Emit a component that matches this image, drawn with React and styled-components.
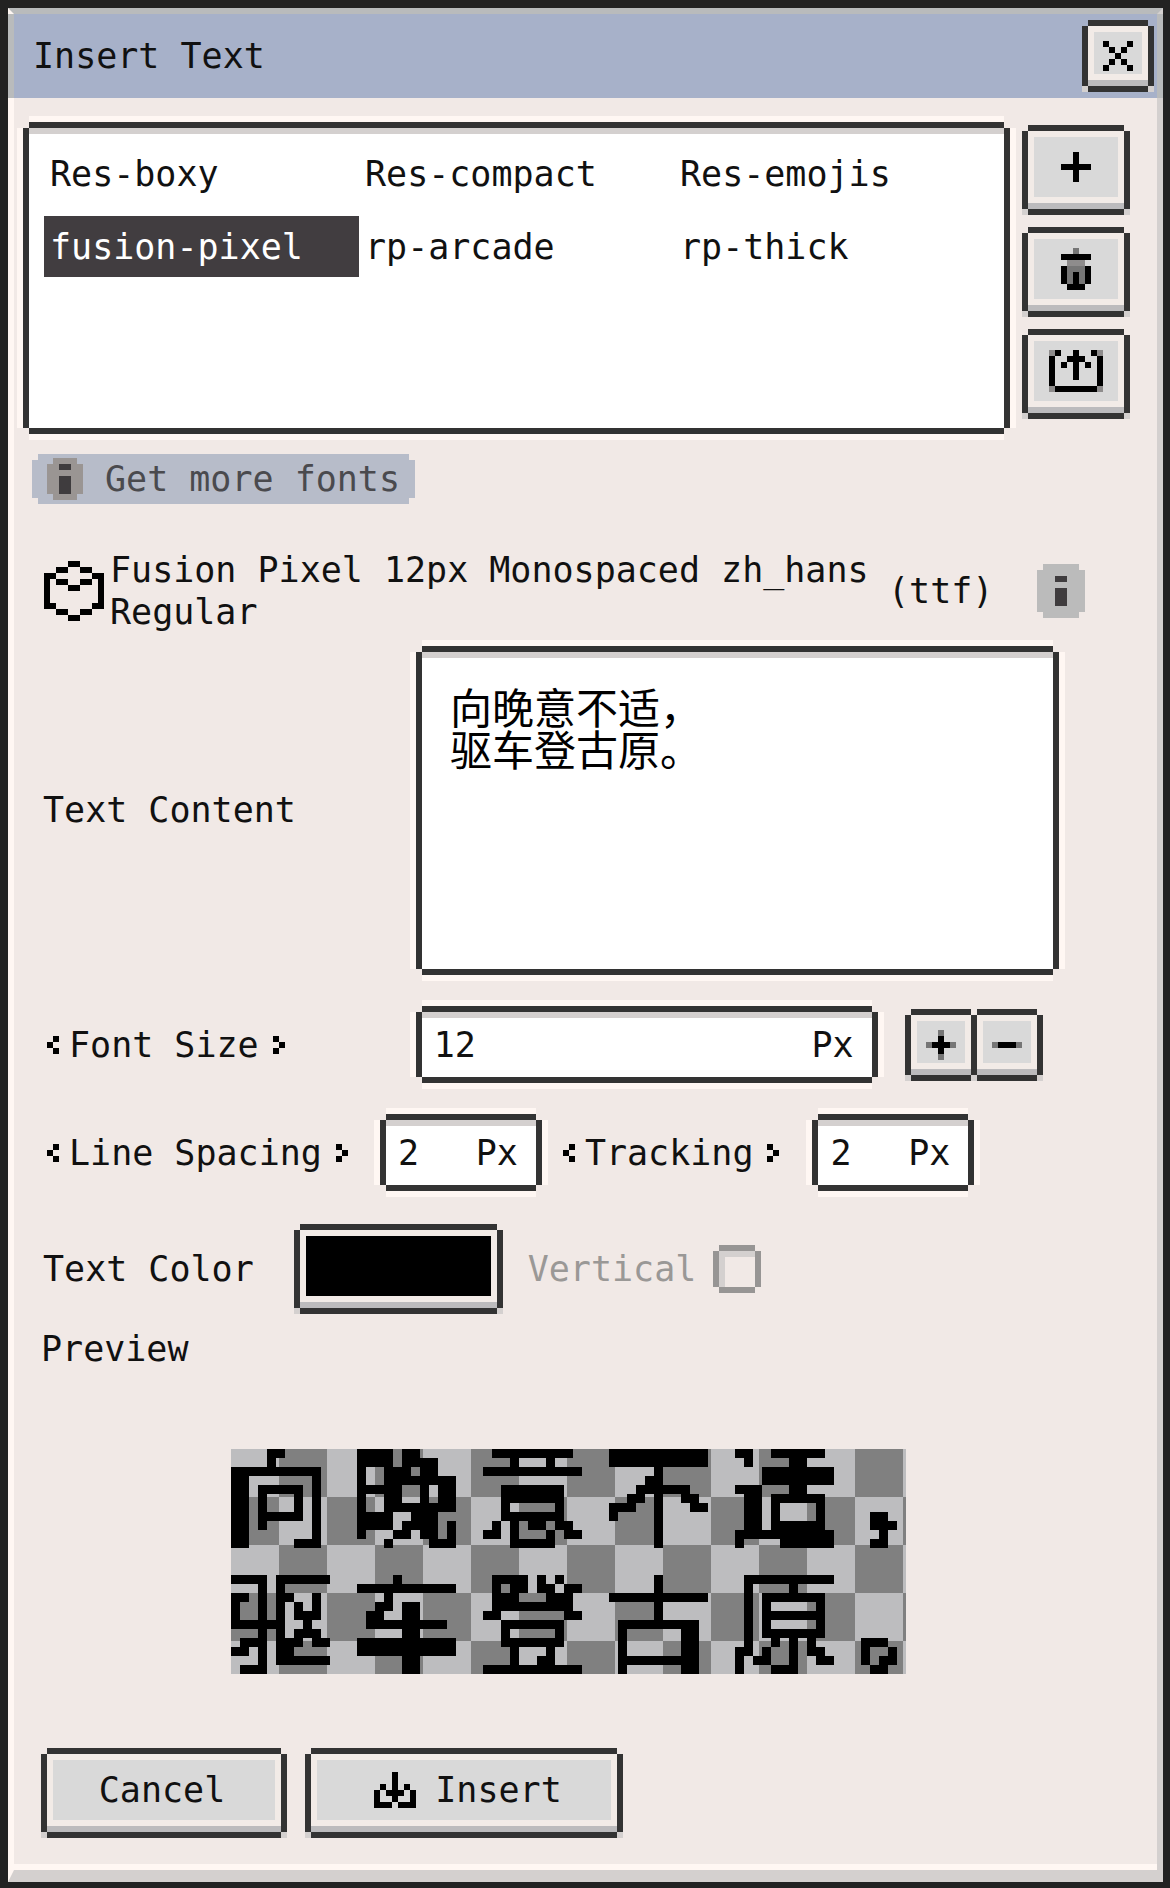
import React from 'react'
import styled, { createGlobalStyle, css } from 'styled-components'

const GlobalStyle = createGlobalStyle`
    html, body {
        margin: 0;
        padding: 0;
        background: #222;
    }
    * {
        box-sizing: border-box;
    }
`

const DARK = '#333333'
const BODY = '#f1e9e6'
const GLOW = '#fff7f3'
const EDGE = '#d4d0cf'

const palette = {
    '#': '#000000',
    g: '#8e8c8c',
    d: '#767676',
    k: '#3f3c3e',
    s: '#bbbbbb',
    m: '#9a9593',
}

function Pixel({ rows, size = 6 }) {
    const cells = []
    rows.forEach((row, y) => {
        row.split('').forEach((c, x) => {
            if (c !== '.') {
                cells.push(<rect key={x + '-' + y} x={x * size} y={y * size} width={size} height={size} fill={palette[c]} />)
            }
        })
    })
    return (
        <svg width={rows[0].length * size} height={rows.length * size} shapeRendering="crispEdges" style={{ display: 'block', flex: 'none' }}>
            {cells}
        </svg>
    )
}

const ICONS = {
    close: ['#...#', '.#.#.', '..#..', '.#.#.', '#...#'],
    plus: ['..#..', '..#..', '#####', '..#..', '..#..'],
    smallPlus: ['..d..', '..#..', 'd###d', '..#..', '..d..'],
    minus: ['d###d'],
    trash: ['..d..', '#####', '.ggg.', '#ddd#', '#d#d#', '#d#d#', '.###.'],
    upload: [
        'g#..#..#g',
        '#..###..#',
        '#.#.#.#.#',
        '#...#...#',
        '#...#...#',
        '#.......#',
        'g#######g',
    ],
    insert: ['...#...', '...#...', '.#.#.#.', '#.###.#', '#..#..#', '###.###'],
    font: [
        '....##....',
        '..##..##..',
        '##......##',
        '#.##..##.#',
        '#...##...#',
        '#........#',
        '#........#',
        '##......##',
        '..##..##..',
        '....##....',
    ],
    infoBig: ['.ssssss.', 'ssssssss', 'ssskksss', 'ssssssss', 'ssskksss', 'ssskksss', 'ssskksss', 'ssssssss', '.ssssss.'],
    infoDim: ['.mmmm.', 'mmkkmm', 'mmmmmm', 'mmkkmm', 'mmkkmm', 'mmkkmm', '.mmmm.'],
    left: ['.#', '#.', '.#'],
    right: ['#.', '.#', '#.'],
}

const Frame = styled.div`
    width: 1170px;
    height: 1888px;
    padding: 8px 7px 6px 8px;
    background: #222;
    overflow: hidden;
    font-family: "DejaVu Sans Mono", "Liberation Mono", "Noto Sans CJK SC", monospace;
    font-size: 35px;
    line-height: 42px;
    color: #111;
`

const Window = styled.div`
    height: 100%;
    display: flex;
    flex-direction: column;
    background: ${BODY};
    border-top: 6px solid #b9bbbc;
    border-left: 6px solid ${GLOW};
    border-right: 6px solid ${EDGE};
    border-bottom: 12px solid ${EDGE};
`

const TitleBar = styled.div`
    height: 84px;
    margin: 0 -6px;
    padding: 0 9px 0 19px;
    display: flex;
    align-items: center;
    justify-content: space-between;
    background: #a7b1c9;
    border-left: 6px solid #b9bbbc;
    border-right: 6px solid #b9bbbc;
`

const Body = styled.div`
    flex: 1;
    border-bottom: 6px solid ${GLOW};
`

const raised = css`
    display: flex;
    align-items: center;
    justify-content: center;
    background: #d9d9d9;
    box-shadow:
        inset 0 -6px 0 #bcbbbd,
        inset 0 -12px 0 #f2ebe7,
        inset 0 0 0 6px #f2ebe7,
        0 -6px 0 ${DARK},
        0 6px 0 ${DARK},
        -6px 0 0 ${DARK},
        6px 0 0 ${DARK},
        -6px 6px 0 ${EDGE},
        6px 6px 0 ${EDGE};
`

const sunken = css`
    background: #fff;
    box-shadow:
        inset 0 6px 0 ${EDGE},
        0 -6px 0 ${DARK},
        0 6px 0 ${DARK},
        -6px 0 0 ${DARK},
        6px 0 0 ${DARK},
        0 -12px 0 ${GLOW},
        0 12px 0 ${GLOW},
        -12px 0 0 ${GLOW},
        12px 0 0 ${GLOW};
`

const SquareButton = styled.div`
    ${raised}
    flex: none;
    width: ${(p) => p.$size}px;
    height: ${(p) => p.$size}px;
`

const ListRow = styled.div`
    display: flex;
    margin: 30px 0 0 15px;
`

const FontList = styled.div`
    ${sunken}
    width: 975px;
    height: 300px;
    padding: 15px;
    display: grid;
    grid-template-columns: repeat(3, 315px);
    grid-auto-rows: 61px;
    row-gap: 12px;
`

const FontCell = styled.div`
    padding: 1px 0 0 6px;
    line-height: 60px;
    background: ${(p) => (p.$selected ? '#413d40' : 'transparent')};
    color: ${(p) => (p.$selected ? '#fff' : '#111')};
`

const SideButtons = styled.div`
    margin: 3px 0 0 24px;
    display: flex;
    flex-direction: column;
    gap: 24px;
`

const SideButton = styled.div`
    ${raised}
    width: 96px;
    height: 78px;
    padding-bottom: 6px;
`

const MoreFonts = styled.div`
    width: 383px;
    height: 50px;
    margin: 26px 0 0 18px;
    padding-left: 15px;
    display: flex;
    align-items: center;
    gap: 22px;
    background: #b7bcc9;
    color: #4a4a4e;
    clip-path: polygon(6px 0, calc(100% - 6px) 0, calc(100% - 6px) 6px, 100% 6px, 100% calc(100% - 6px), calc(100% - 6px) calc(100% - 6px), calc(100% - 6px) 100%, 6px 100%, 6px calc(100% - 6px), 0 calc(100% - 6px), 0 6px, 6px 6px);
`

const FontInfo = styled.div`
    margin: 45px 0 0 30px;
    display: flex;
    align-items: center;
`

const FontName = styled.div`
    width: 778px;
    margin-left: 6px;
`

const FontType = styled.div`
    width: 149px;
`

const ContentRow = styled.div`
    margin: 19px 0 0 29px;
    display: flex;
    align-items: center;
`

const FieldLabel = styled.div`
    flex: none;
    width: ${(p) => p.$width}px;
    padding-bottom: 2px;
`

const TextBox = styled.div`
    ${sunken}
    width: 631px;
    height: 317px;
    padding: 33px 0 0 28px;
    font-family: "Noto Sans CJK SC", sans-serif;
    font-size: 42px;
    line-height: 42px;
    color: #000;
`

const FieldRow = styled.div`
    margin: ${(p) => p.$top}px 0 0 33px;
    display: flex;
    align-items: center;
`

const Stepper = styled.div`
    flex: none;
    display: flex;
    align-items: center;
    margin-left: ${(p) => p.$before || 0}px;
    margin-right: ${(p) => p.$after}px;
`

const StepperText = styled.span`
    margin: 0 14px 0 10px;
`

const NumberInput = styled.div`
    ${sunken}
    flex: none;
    width: ${(p) => p.$width}px;
    height: 65px;
    padding: 0 18px 0 12px;
    display: flex;
    align-items: center;
    justify-content: space-between;
`

const StepButtons = styled.div`
    margin-left: 39px;
    display: flex;
    gap: 6px;
`

const ColorRow = styled.div`
    margin: 45px 0 0 29px;
    display: flex;
    align-items: center;
`

const ColorButton = styled.div`
    ${raised}
    width: 197px;
    height: 78px;
    margin: 0 31px 0 46px;
    padding-bottom: 6px;
`

const Swatch = styled.div`
    width: 185px;
    height: 60px;
    background: #000;
`

const Disabled = styled.span`
    color: #9a9896;
`

const CheckBox = styled.div`
    width: 36px;
    height: 36px;
    margin-left: 23px;
    background: ${BODY};
    box-shadow:
        inset 6px 6px 0 ${EDGE},
        0 -6px 0 #979594,
        0 6px 0 #979594,
        -6px 0 0 #979594,
        6px 0 0 #979594;
`

const PreviewLabel = styled.div`
    margin: 20px 0 0 27px;
`

const Preview = styled.div`
    width: 675px;
    height: 225px;
    margin: 79px 0 0 217px;
    overflow: hidden;
    background: conic-gradient(#808080 25%, #bdbdbf 0 50%, #808080 0 75%, #bdbdbf 0) 0 0 / 96px 96px;
`

const PreviewText = styled.div`
    width: 800px;
    margin: -22px 0 0 -5px;
    font-family: "Noto Sans CJK SC", sans-serif;
    font-size: 108px;
    line-height: 126px;
    letter-spacing: 18px;
    white-space: nowrap;
    color: #000;
    filter: url(#pixelate);
`

const Footer = styled.div`
    margin: 80px 0 0 33px;
    display: flex;
    gap: 30px;
`

const FooterButton = styled.div`
    ${raised}
    width: ${(p) => p.$width}px;
    height: 78px;
    gap: 19px;
    padding: 0 ${(p) => p.$inset || 0}px 6px ${(p) => p.$shift || 0}px;
`

const fonts = ['Res-boxy', 'Res-compact', 'Res-emojis', 'fusion-pixel', 'rp-arcade', 'rp-thick']

function ArrowLabel({ children }) {
    return (
        <>
            <Pixel rows={ICONS.left} />
            <StepperText>{children}</StepperText>
            <Pixel rows={ICONS.right} />
        </>
    )
}

export default function App() {
    return (
        <Frame>
            <GlobalStyle />
            <svg width="0" height="0" style={{ position: 'absolute' }}>
                <filter id="pixelate" x="0" y="0" width="100%" height="100%" colorInterpolationFilters="sRGB">
                    <feMorphology in="SourceGraphic" operator="dilate" radius="1" result="fat" />
                    <feFlood x="0" y="8" width="1" height="1" floodColor="#000" />
                    <feComposite width="9" height="9" />
                    <feTile result="grid" />
                    <feComposite in="fat" in2="grid" operator="in" />
                    <feMorphology operator="dilate" radius="4" />
                    <feComponentTransfer>
                        <feFuncA type="discrete" tableValues="0 1 1 1 1" />
                    </feComponentTransfer>
                </filter>
            </svg>
            <Window>
                <TitleBar>
                    <span>Insert Text</span>
                    <SquareButton $size={60}>
                        <Pixel rows={ICONS.close} />
                    </SquareButton>
                </TitleBar>
                <Body>
                    <ListRow>
                        <FontList>
                            {fonts.map((name) => (
                                <FontCell key={name} $selected={name === 'fusion-pixel'}>{name}</FontCell>
                            ))}
                        </FontList>
                        <SideButtons>
                            <SideButton><Pixel rows={ICONS.plus} /></SideButton>
                            <SideButton><Pixel rows={ICONS.trash} /></SideButton>
                            <SideButton><Pixel rows={ICONS.upload} /></SideButton>
                        </SideButtons>
                    </ListRow>
                    <MoreFonts>
                        <Pixel rows={ICONS.infoDim} />
                        <span>Get more fonts</span>
                    </MoreFonts>
                    <FontInfo>
                        <Pixel rows={ICONS.font} />
                        <FontName>
                            Fusion Pixel 12px Monospaced zh_hans
                            <br />
                            Regular
                        </FontName>
                        <FontType>(ttf)</FontType>
                        <Pixel rows={ICONS.infoBig} />
                    </FontInfo>
                    <ContentRow>
                        <FieldLabel $width={379}>Text Content</FieldLabel>
                        <TextBox>
                            向晚意不适，
                            <br />
                            驱车登古原。
                        </TextBox>
                    </ContentRow>
                    <FieldRow $top={43}>
                        <Stepper $after={137}>
                            <ArrowLabel>Font Size</ArrowLabel>
                        </Stepper>
                        <NumberInput $width={450}>
                            <span>12</span>
                            <span>Px</span>
                        </NumberInput>
                        <StepButtons>
                            <SquareButton $size={60}><Pixel rows={ICONS.smallPlus} /></SquareButton>
                            <SquareButton $size={60}><Pixel rows={ICONS.minus} /></SquareButton>
                        </StepButtons>
                    </FieldRow>
                    <FieldRow $top={43}>
                        <Stepper $after={38}>
                            <ArrowLabel>Line Spacing</ArrowLabel>
                        </Stepper>
                        <NumberInput $width={150}>
                            <span>2</span>
                            <span>Px</span>
                        </NumberInput>
                        <Stepper $before={27} $after={39}>
                            <ArrowLabel>Tracking</ArrowLabel>
                        </Stepper>
                        <NumberInput $width={150}>
                            <span>2</span>
                            <span>Px</span>
                        </NumberInput>
                    </FieldRow>
                    <ColorRow>
                        <span>Text Color</span>
                        <ColorButton><Swatch /></ColorButton>
                        <Disabled>Vertical</Disabled>
                        <CheckBox />
                    </ColorRow>
                    <PreviewLabel>Preview</PreviewLabel>
                    <Preview>
                        <PreviewText>
                            向晚意不适，
                            <br />
                            驱车登古原。
                        </PreviewText>
                    </Preview>
                    <Footer>
                        <FooterButton $width={234} $inset={4}>Cancel</FooterButton>
                        <FooterButton $width={306} $shift={8}>
                            <Pixel rows={ICONS.insert} />
                            <span>Insert</span>
                        </FooterButton>
                    </Footer>
                </Body>
            </Window>
        </Frame>
    )
}
